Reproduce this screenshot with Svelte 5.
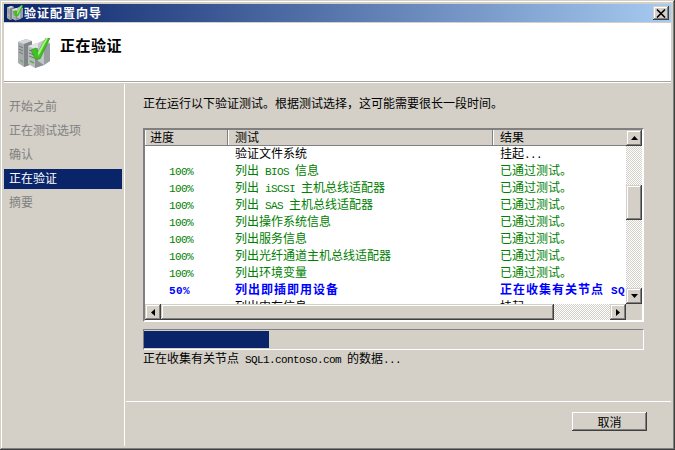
<script>
  const navItems = ['开始之前', '正在测试选项', '确认', '正在验证', '摘要'];
  const activeNav = 3;

  const PASSED = '已通过测试。';
  const rows = [
    { pct: '', name: '验证文件系统', result: '挂起...', kind: 'idle' },
    { pct: '100%', name: '列出 BIOS 信息', result: PASSED, kind: 'done' },
    { pct: '100%', name: '列出 iSCSI 主机总线适配器', result: PASSED, kind: 'done' },
    { pct: '100%', name: '列出 SAS 主机总线适配器', result: PASSED, kind: 'done' },
    { pct: '100%', name: '列出操作系统信息', result: PASSED, kind: 'done' },
    { pct: '100%', name: '列出服务信息', result: PASSED, kind: 'done' },
    { pct: '100%', name: '列出光纤通道主机总线适配器', result: PASSED, kind: 'done' },
    { pct: '100%', name: '列出环境变量', result: PASSED, kind: 'done' },
    { pct: '50%', name: '列出即插即用设备', result: '正在收集有关节点 SQL1.contoso.com 的数据...', kind: 'run' },
    { pct: '', name: '列出内存信息', result: '挂起...', kind: 'idle' },
  ];

  // latin runs get their own span so they come out half width next to the CJK
  const split = (s) => s.split(/([ -~]+)/).filter(Boolean);
  const isLatin = (s) => /^[ -~]/.test(s);
</script>

{#snippet mixed(text)}
  {#each split(text) as part}
    {#if isLatin(part)}<span class="lat">{part}</span>{:else}{part}{/if}
  {/each}
{/snippet}

{#snippet wizardIcon(cls)}
  <svg class={cls} viewBox="0 0 32 30" aria-hidden="true">
    <polygon points="0,4 8,1 14,3 14,26 6,29 0,25" fill="#a9adb0" />
    <polygon points="0,4 8,1 14,3 6,6" fill="#d5d8da" />
    <polygon points="6,6 14,3 14,26 6,29" fill="#7f8589" />
    <polygon points="10,8 19,5 26,8 26,27 17,30 10,26" fill="#b9bcbf" />
    <polygon points="10,8 19,5 26,8 17,11" fill="#e2e4e5" />
    <polygon points="17,11 26,8 26,27 17,30" fill="#8a9094" />
    <polygon points="20,5 26,2 32,5 32,23 26,27 20,23" fill="#c3c6c8" />
    <polygon points="26,8 32,5 32,23 26,27" fill="#989da1" />
    <path d="M1 8l4 2M1 11l4 2M1 14l4 2M11 12l5 2M11 15l5 2M11 18l5 2" stroke="#70767a" stroke-width="1" fill="none" />
    <path d="M2 22l3 2M12 23l4 2" stroke="#5fb04a" stroke-width="1.4" fill="none" />
    <polygon points="13,12 18,10 20,14 28,0 32,0 22,21 17,21" fill="#3fc322" stroke="#2a8f18" stroke-width=".6" />
    <polygon points="20,14 28,0 30,0 20.5,18" fill="#a8f080" />
  </svg>
{/snippet}

<div class="window">
  <div class="titlebar">
    {@render wizardIcon('title-icon')}
    <span class="title-text">验证配置向导</span>
    <button class="close raised" type="button" aria-label="关闭">
      <svg viewBox="0 0 10 9" width="10" height="9"><path d="M1 0.5L9 8.5M9 0.5L1 8.5" stroke="#000" stroke-width="1.6" /></svg>
    </button>
  </div>

  <header class="banner">
    {@render wizardIcon('banner-icon')}
    <h1>正在验证</h1>
  </header>

  <div class="body">
    <nav class="steps">
      {#each navItems as item, i}
        <div class="step" class:active={i === activeNav}>{item}</div>
      {/each}
    </nav>

    <main class="content">
      <div class="pane">
        <p class="intro">正在运行以下验证测试。根据测试选择，这可能需要很长一段时间。</p>

        <div class="list">
          <div class="list-main">
            <div class="list-head">
              <div class="hcell">进度</div>
              <div class="hcell">测试</div>
              <div class="hcell">结果</div>
            </div>
            <div class="list-rows">
              {#each rows as row}
                <div class="row {row.kind}">
                  <div class="pct">{@render mixed(row.pct)}</div>
                  <div class="name">{@render mixed(row.name)}</div>
                  <div class="result">{@render mixed(row.result)}</div>
                </div>
              {/each}
            </div>
          </div>

          <div class="vscroll track">
            <button class="sbtn raised" type="button" aria-label="上">
              <svg viewBox="0 0 7 4" width="7" height="4"><polygon points="3.5,0 7,4 0,4" /></svg>
            </button>
            <div class="vthumb raised"></div>
            <button class="sbtn raised" type="button" aria-label="下">
              <svg viewBox="0 0 7 4" width="7" height="4"><polygon points="0,0 7,0 3.5,4" /></svg>
            </button>
          </div>

          <div class="hscroll track">
            <button class="sbtn raised" type="button" aria-label="左">
              <svg viewBox="0 0 4 7" width="4" height="7"><polygon points="4,0 4,7 0,3.5" /></svg>
            </button>
            <div class="hthumb raised"></div>
            <button class="sbtn raised" type="button" aria-label="右">
              <svg viewBox="0 0 4 7" width="4" height="7"><polygon points="0,0 4,3.5 0,7" /></svg>
            </button>
          </div>
          <div class="corner"></div>
        </div>

        <div class="progress"><div class="bar" style="width: 25%"></div></div>
        <p class="status">{@render mixed('正在收集有关节点 SQL1.contoso.com 的数据...')}</p>
      </div>

      <footer class="actions">
        <button class="cancel" type="button">取消</button>
      </footer>
    </main>
  </div>
</div>

<style>
  :global(body) {
    margin: 0;
    background: #d4d0c8;
  }

  .window {
    box-sizing: border-box;
    width: 675px;
    height: 450px;
    padding: 4px;
    display: flex;
    flex-direction: column;
    background: #d4d0c8;
    color: #000;
    font-family: "Noto Sans CJK SC", "Liberation Sans", sans-serif;
    font-size: 12px;
    box-shadow:
      inset -1px -1px #404040,
      inset 1px 1px #d4d0c8,
      inset -2px -2px #808080,
      inset 2px 2px #fff;
  }

  .lat {
    font-family: "Liberation Mono", monospace;
    font-size: 11px;
    letter-spacing: -0.6px;
    white-space: pre;
  }

  .raised {
    box-sizing: border-box;
    padding: 0;
    border: 0;
    display: flex;
    align-items: center;
    justify-content: center;
    background: #d4d0c8;
    box-shadow:
      inset -1px -1px #404040,
      inset 1px 1px #d4d0c8,
      inset -2px -2px #808080,
      inset 2px 2px #fff;
  }

  .titlebar {
    flex: none;
    height: 18px;
    display: flex;
    align-items: center;
    padding: 0 2px 0 3px;
    margin-bottom: 1px;
    background: linear-gradient(90deg, #0a246a, #a6caf0);
    color: #fff;
  }

  .title-icon {
    width: 16px;
    height: 16px;
    margin-right: 1px;
  }

  .title-text {
    flex: 1;
    font-weight: 700;
    letter-spacing: 1px;
    line-height: 16px;
  }

  .close {
    width: 16px;
    height: 14px;
  }

  .banner {
    flex: none;
    box-sizing: border-box;
    height: 60px;
    display: flex;
    align-items: flex-start;
    padding: 15px 0 0 14px;
    background: #fff;
    border-bottom: 2px solid #fff;
    position: relative;
  }

  .banner::after {
    content: '';
    position: absolute;
    left: 0;
    right: 0;
    bottom: -1px;
    height: 1px;
    background: #a8a49c;
  }

  .banner-icon {
    width: 32px;
    height: 30px;
    flex: none;
  }

  h1 {
    margin: -4px 0 0 10px;
    font-size: 15px;
    letter-spacing: 0.5px;
    line-height: 22px;
    font-weight: 700;
  }

  .body {
    flex: 1;
    display: flex;
    min-height: 0;
    padding-top: 1px;
  }

  .steps {
    flex: none;
    box-sizing: border-box;
    width: 121px;
    padding: 13px 2px 0 0;
    display: flex;
    flex-direction: column;
    gap: 4px;
    border-right: 1px solid #fff;
    color: #808080;
  }

  .step {
    height: 20px;
    line-height: 18px;
    padding-left: 5px;
  }

  .step.active {
    background: #0a246a;
    color: #fff;
  }

  .content {
    flex: 1;
    min-width: 0;
    display: flex;
    flex-direction: column;
    padding-left: 1px;
  }

  .pane {
    padding-left: 17px;
  }

  .intro {
    margin: 10px 0 16px;
    line-height: 18px;
  }

  .list {
    box-sizing: border-box;
    width: 501px;
    height: 194px;
    display: grid;
    grid-template-columns: 1fr 16px;
    grid-template-rows: 1fr 16px;
    border: 2px solid;
    border-color: #808080 #fff #fff #808080;
    box-shadow: inset 1px 1px #404040;
  }

  .list-main {
    min-width: 0;
    min-height: 0;
    display: flex;
    flex-direction: column;
    background: #fff;
  }

  .list-head {
    flex: none;
    box-sizing: border-box;
    height: 16px;
    display: grid;
    grid-template-columns: 83px 265px 1fr;
    background: #d4d0c8;
    border-bottom: 1px solid #808080;
    line-height: 13px;
  }

  .hcell {
    padding-left: 5px;
    border-right: 1px solid #808080;
    box-shadow: inset 1px 0 #fff;
  }

  .hcell:nth-child(2),
  .hcell:nth-child(3) {
    padding-left: 7px;
  }

  .hcell:nth-child(3) {
    border-right: 0;
  }

  .list-rows {
    flex: 1;
    min-height: 0;
    overflow: hidden;
  }

  .row {
    display: grid;
    grid-template-columns: 83px 265px 1fr;
    height: 17px;
    line-height: 13px;
    white-space: nowrap;
  }

  .row.done {
    color: #008000;
  }

  .row.run {
    color: #0000ff;
    font-weight: 700;
    letter-spacing: 1px;
  }

  .row.run .lat {
    letter-spacing: 0.4px;
  }

  .pct {
    padding-left: 24px;
  }

  .name,
  .result {
    padding-left: 7px;
  }

  .track {
    background: repeating-conic-gradient(#fff 0 25%, #d4d0c8 0 50%) 0 0 / 2px 2px;
  }

  .vscroll {
    display: flex;
    flex-direction: column;
    justify-content: space-between;
    position: relative;
  }

  .vthumb {
    position: absolute;
    left: 0;
    top: 55px;
    width: 16px;
    height: 35px;
  }

  .hscroll {
    display: flex;
  }

  .hthumb {
    width: 393px;
    height: 16px;
  }

  .hscroll .sbtn:last-child {
    margin-left: auto;
  }

  .sbtn {
    flex: none;
    width: 16px;
    height: 16px;
  }

  .corner {
    background: #d4d0c8;
  }

  .progress {
    box-sizing: border-box;
    width: 501px;
    height: 21px;
    margin-top: 7px;
    padding: 1px 0;
    border: 1px solid;
    border-color: #808080 #fff #fff #808080;
  }

  .bar {
    height: 17px;
    background: #0a246a;
  }

  .status {
    margin: 1px 0 0;
    line-height: 14px;
  }

  .actions {
    margin-top: auto;
    display: flex;
    justify-content: flex-end;
    box-sizing: border-box;
    height: 45px;
    padding: 10px 24px 0 0;
    border-top: 1px solid #fff;
  }

  .cancel {
    box-sizing: border-box;
    width: 75px;
    height: 19px;
    padding: 0;
    border: 0;
    background: #d4d0c8;
    font: inherit;
    line-height: 17px;
    color: #000;
    box-shadow:
      inset -1px -1px #404040,
      inset 1px 1px #fff,
      inset -2px -2px #808080;
  }
</style>
